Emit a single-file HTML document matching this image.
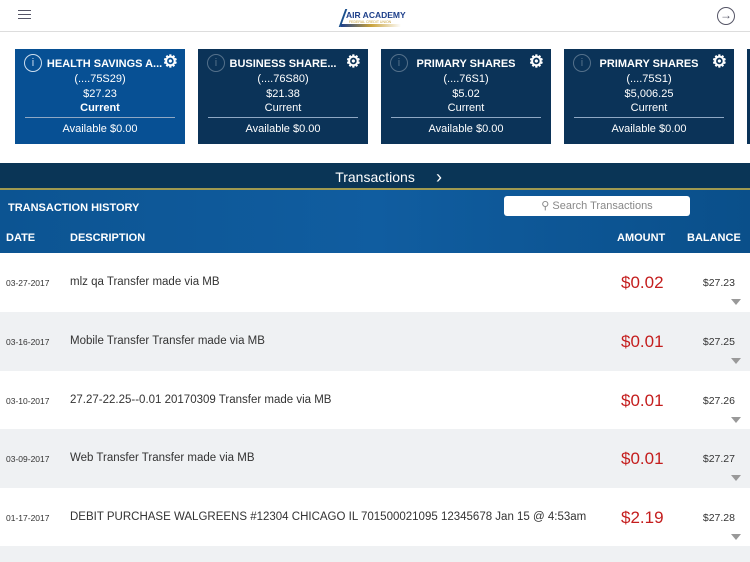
<!DOCTYPE html>
<html><head><meta charset="utf-8"><style>
*{margin:0;padding:0;box-sizing:border-box}
html,body{width:750px;height:562px;overflow:hidden}
body{background:#fff;font-family:"Liberation Sans",sans-serif;position:relative}
.top{position:absolute;left:0;top:0;width:750px;height:32px;background:#fff;border-bottom:1px solid #ddd}
.card{position:absolute;top:49px;width:170px;height:95px;background:#0b3358;color:#fff;text-align:center;font-size:11px}
.card.a{background:#075094}
.card .t{position:absolute;top:9px;left:0;right:0;font-weight:bold;font-size:11px}
.card .l{position:absolute;left:0;right:0}
.card .ln{position:absolute;left:10px;right:10px;top:68px;border-top:1px solid #8fa8c4}
.info{position:absolute;left:9px;top:5px;width:18px;height:18px;border:1px solid rgba(255,255,255,.3);border-radius:50%;font-size:11px;line-height:16px;color:rgba(255,255,255,.3)}
.card.a .info{border-color:#cde;color:#cde}
.gear{position:absolute;right:7px;top:3px;font-size:17px;font-weight:bold}
.bar{position:absolute;top:163px;left:0;width:750px;height:27px;background:#0a3556;border-bottom:2px solid #a09a50;color:#fff;font-size:14px;text-align:center;line-height:28px}
.hdr{position:absolute;top:190px;left:0;width:750px;height:63px;background:linear-gradient(90deg,#0c5492,#105da0 50%,#0a4f8a);color:#fff;font-weight:bold;font-size:11px}
.row{position:absolute;left:0;width:750px;height:59px;font-size:11.5px;color:#333;overflow:hidden}
.row .d{position:absolute;left:6px;top:25px;font-size:8.5px}
.row .s{position:absolute;left:70px;top:23px}
.row .m{position:absolute;left:621px;top:20px;font-size:17px;color:#c41d1d}
.row .b{position:absolute;right:15px;top:24px;font-size:10.5px}
.row .v{position:absolute;right:9px;top:46px;width:0;height:0;border-left:5px solid transparent;border-right:5px solid transparent;border-top:6px solid #999}
.g{background:#eff1f3}
</style></head><body>
<div class="top">
<div style="position:absolute;left:18px;top:10px;width:13px;height:1.3px;background:#556;box-shadow:0 4px 0 #556,0 8px 0 #556"></div>
<div style="position:absolute;left:339px;top:5px;width:72px;height:22px;">
<div style="position:absolute;left:3px;top:4px;width:2px;height:18px;background:#1a4f8c;transform:skewX(-20deg)"></div>
<div style="position:absolute;left:7px;top:5px;font-size:8.5px;font-weight:bold;color:#1d3f8a">AIR ACADEMY</div>
<div style="position:absolute;left:10px;top:15px;font-size:3.5px;color:#c9a23a">FEDERAL CREDIT UNION</div>
<div style="position:absolute;left:2px;top:19px;width:60px;height:3px;background:linear-gradient(90deg,#1d3f8a,#c9a23a,transparent)"></div>
</div>
<div style="position:absolute;left:717px;top:7px;width:18px;height:18px;border:1.2px solid #556;border-radius:50%;font-size:12px;line-height:15px;text-align:center;color:#556">→</div>
</div>

<div class="card a" style="left:15px"><div class="info">i</div><div class="t">&nbsp;&nbsp;&nbsp;HEALTH SAVINGS A...</div><div class="gear">⚙</div><div class="l" style="top:24px">(....75S29)</div><div class="l" style="top:39px">$27.23</div><div class="l" style="top:53px;font-weight:bold">Current</div><div class="ln"></div><div class="l" style="top:74px">Available $0.00</div></div>
<div class="card" style="left:198px"><div class="info">i</div><div class="t">BUSINESS SHARE...</div><div class="gear">⚙</div><div class="l" style="top:24px">(....76S80)</div><div class="l" style="top:39px">$21.38</div><div class="l" style="top:53px">Current</div><div class="ln"></div><div class="l" style="top:74px">Available $0.00</div></div>
<div class="card" style="left:381px"><div class="info">i</div><div class="t">PRIMARY SHARES</div><div class="gear">⚙</div><div class="l" style="top:24px">(....76S1)</div><div class="l" style="top:39px">$5.02</div><div class="l" style="top:53px">Current</div><div class="ln"></div><div class="l" style="top:74px">Available $0.00</div></div>
<div class="card" style="left:564px"><div class="info">i</div><div class="t">PRIMARY SHARES</div><div class="gear">⚙</div><div class="l" style="top:24px">(....75S1)</div><div class="l" style="top:39px">$5,006.25</div><div class="l" style="top:53px">Current</div><div class="ln"></div><div class="l" style="top:74px">Available $0.00</div></div>
<div class="card" style="left:747px;width:3px"></div>

<div class="bar">Transactions<span style="position:absolute;left:436px;top:0;font-size:18px">›</span></div>
<div class="hdr">
<div style="position:absolute;left:8px;top:12px">TRANSACTION HISTORY</div>
<div style="position:absolute;left:504px;top:6px;width:186px;height:20px;background:#fff;border-radius:3px;color:#888;font-weight:normal;text-align:center;line-height:20px">⚲ Search Transactions</div>
<div style="position:absolute;left:6px;top:42px">DATE</div>
<div style="position:absolute;left:70px;top:42px">DESCRIPTION</div>
<div style="position:absolute;left:617px;top:42px">AMOUNT</div>
<div style="position:absolute;left:687px;top:42px">BALANCE</div>
</div>

<div class="row" style="top:253px"><div class="d">03-27-2017</div><div class="s">mlz qa Transfer made via MB</div><div class="m">$0.02</div><div class="b">$27.23</div><div class="v"></div></div>
<div class="row g" style="top:312px"><div class="d">03-16-2017</div><div class="s">Mobile Transfer Transfer made via MB</div><div class="m">$0.01</div><div class="b">$27.25</div><div class="v"></div></div>
<div class="row" style="top:371px"><div class="d">03-10-2017</div><div class="s">27.27-22.25--0.01 20170309 Transfer made via MB</div><div class="m">$0.01</div><div class="b">$27.26</div><div class="v"></div></div>
<div class="row g" style="top:429px"><div class="d">03-09-2017</div><div class="s">Web Transfer Transfer made via MB</div><div class="m">$0.01</div><div class="b">$27.27</div><div class="v"></div></div>
<div class="row" style="top:488px"><div class="d">01-17-2017</div><div class="s">DEBIT PURCHASE WALGREENS #12304 CHICAGO IL 701500021095 12345678 Jan 15 @ 4:53am</div><div class="m">$2.19</div><div class="b">$27.28</div><div class="v"></div></div>
<div class="row g" style="top:546px;height:16px"></div>
</body></html>
